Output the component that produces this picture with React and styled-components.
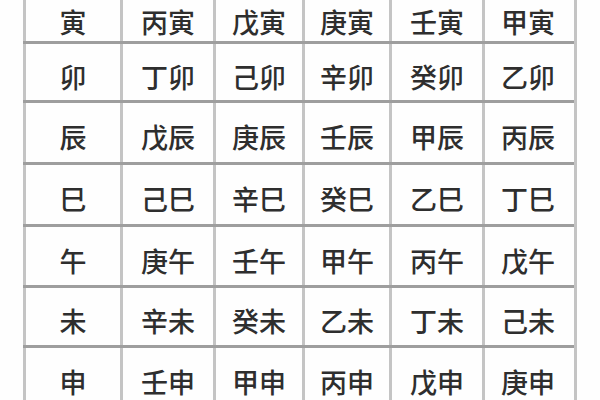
import React from "react";
import styled, { createGlobalStyle } from "styled-components";

const Global = createGlobalStyle`
  html, body { margin: 0; padding: 0; background: #fff; }
  body { width: 600px; height: 400px; overflow: hidden; }
`;

const Page = styled.div`
  width: 600px;
  height: 400px;
  overflow: hidden;
  background: #fefefe;
  padding-left: 23px;
  box-sizing: border-box;
`;

const Table = styled.div`
  display: flex;
  flex-direction: column;
  width: 551px;
  border-right: 3px solid #c4c4c4;
`;

const Row = styled.div`
  display: grid;
  grid-template-columns: 97px 93px 89px 87px 93px 89px;
  height: ${(p) => p.$h}px;
  border-bottom: 3px solid #9e9e9e;
  box-sizing: border-box;
`;

const Cell = styled.div`
  display: flex;
  justify-content: center;
  align-items: ${(p) => (p.$cropped ? "flex-end" : "center")};
  padding-top: ${(p) => (p.$cropped ? 0 : 8)}px;
  padding-bottom: ${(p) => (p.$cropped ? 6 : 0)}px;
  border-left: 3px solid #c4c4c4;
  box-sizing: border-box;
  font-family: "Noto Sans CJK SC", "Noto Sans CJK JP", sans-serif;
  font-size: 27px;
  font-weight: 500;
  line-height: 1;
  color: #2e2e2e;
  letter-spacing: 0px;
`;

const rows = [
  ["寅", "丙寅", "戊寅", "庚寅", "壬寅", "甲寅"],
  ["卯", "丁卯", "己卯", "辛卯", "癸卯", "乙卯"],
  ["辰", "戊辰", "庚辰", "壬辰", "甲辰", "丙辰"],
  ["巳", "己巳", "辛巳", "癸巳", "乙巳", "丁巳"],
  ["午", "庚午", "壬午", "甲午", "丙午", "戊午"],
  ["未", "辛未", "癸未", "乙未", "丁未", "己未"],
  ["申", "壬申", "甲申", "丙申", "戊申", "庚申"],
];

const heights = [44, 59, 62, 62, 61, 60, 62];

export default function App() {
  return (
    <>
      <Global />
      <Page>
        <Table>
          {rows.map((r, i) => (
            <Row key={i} $h={heights[i]}>
              {r.map((t, j) => (
                <Cell key={j} $cropped={i === 0}>
                  {t}
                </Cell>
              ))}
            </Row>
          ))}
        </Table>
      </Page>
    </>
  );
}
